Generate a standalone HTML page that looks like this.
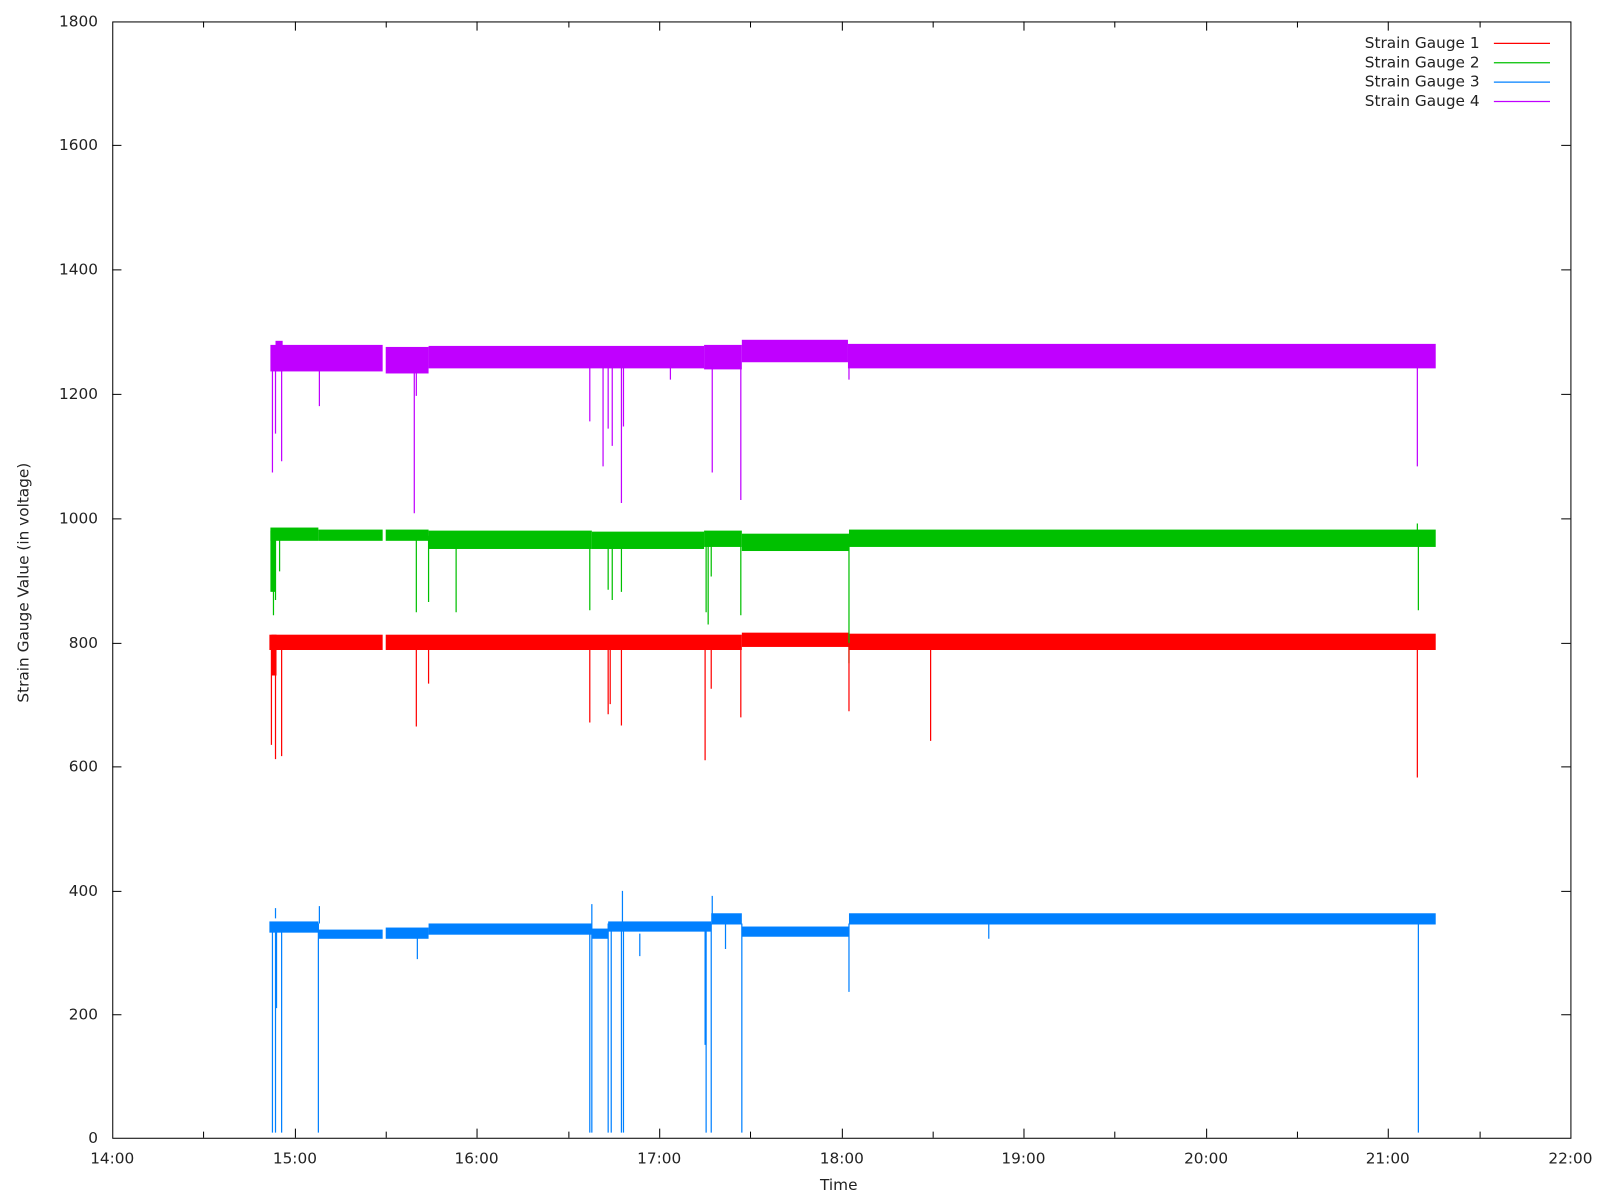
<!DOCTYPE html>
<html><head><meta charset="utf-8"><style>
html,body{margin:0;padding:0;background:#fff;width:1600px;height:1200px;overflow:hidden}
svg{display:block}
text{font-family:"DejaVu Sans","Liberation Sans",sans-serif;font-size:15px;fill:#222}
</style></head><body>
<svg width="1600" height="1200" viewBox="0 0 1568 1176" xmlns="http://www.w3.org/2000/svg">
<rect width="1568" height="1176" fill="#fff"/>
<g fill="#c000ff">
<rect x="265" y="338" width="110" height="26"/>
<rect x="378" y="340" width="42" height="26"/>
<rect x="420" y="339" width="270" height="22"/>
<rect x="690" y="338" width="37" height="24"/>
<rect x="727" y="333" width="104" height="22"/>
<rect x="831" y="337" width="576" height="24"/>
<rect x="270" y="334" width="7" height="30"/>
</g>
<g fill="#00c000">
<rect x="265" y="517" width="47" height="13"/>
<rect x="312" y="519" width="63" height="11"/>
<rect x="378" y="519" width="42" height="11"/>
<rect x="420" y="520" width="160" height="18"/>
<rect x="580" y="521" width="110" height="17"/>
<rect x="690" y="520" width="37" height="16"/>
<rect x="727" y="523" width="105" height="17"/>
<rect x="832" y="519" width="575" height="17"/>
<rect x="265" y="520" width="5" height="60"/>
</g>
<g fill="#ff0000">
<rect x="264" y="622" width="111" height="15"/>
<rect x="378" y="622" width="349" height="15"/>
<rect x="727" y="620" width="105" height="14"/>
<rect x="832" y="621" width="575" height="16"/>
<rect x="266" y="622" width="5" height="40"/>
</g>
<g fill="#0080ff">
<rect x="264" y="903" width="48" height="11"/>
<rect x="312" y="911" width="63" height="9"/>
<rect x="378" y="909" width="42" height="11"/>
<rect x="420" y="905" width="160" height="11"/>
<rect x="580" y="910" width="16" height="10"/>
<rect x="596" y="903" width="101" height="10"/>
<rect x="697" y="895" width="30" height="11"/>
<rect x="727" y="908" width="105" height="10"/>
<rect x="832" y="895" width="575" height="11"/>
</g>
<g stroke="#0080ff" stroke-width="1.2" fill="none">
<path d="M267 905V1110M270 905V1110M276 905V1110M312 905V1110M578 905V1110M580 905V1110M596 905V1110M599 905V1110M609 905V1110M611 905V1110M692 905V1110M697 905V1110M727 905V1110M1390 905V1110M271 905V988M691 905V1024M832 905V972M409 915V940M627 915V937M711 905V930M969 900V920M270 900V890M580 905V886M610 905V873M698 900V878M313 905V888"/>
</g>
<g stroke="#c000ff" stroke-width="1.2" fill="none">
<path d="M267 350V463M270 350V425M276 350V452M313 350V398M406 350V503M408 350V388M578 350V413M591 350V457M596 350V420M600 350V437M609 350V493M611 350V418M698 350V463M726 350V490M1389 350V457M832 350V372M657 350V372"/>
</g>
<g stroke="#00c000" stroke-width="1.2" fill="none">
<path d="M268 525V603M270 525V588M408 525V600M420 525V590M447 525V600M578 525V598M596 525V578M600 525V588M609 525V580M692 525V600M694 525V612M697 525V565M726 525V603M832 525V650M1390 525V598M1389 525V513M274 525V560"/>
</g>
<g stroke="#ff0000" stroke-width="1.2" fill="none">
<path d="M266 630V730M270 630V744M276 630V741M408 630V712M420 630V670M578 630V708M596 630V700M598 630V690M609 630V711M691 630V745M697 630V675M726 630V703M832 630V697M912 630V726M1389 630V762"/>
</g>
<rect x="110.5" y="21.5" width="1429" height="1094" fill="none" stroke="#000" stroke-width="1"/>
<g stroke="#000" stroke-width="1">
<path d="M110 994.5h9M1539 994.5h-9M110 873.5h9M1539 873.5h-9M110 751.5h9M1539 751.5h-9M110 630.5h9M1539 630.5h-9M110 508.5h9M1539 508.5h-9M110 386.5h9M1539 386.5h-9M110 264.5h9M1539 264.5h-9M110 142.5h9M1539 142.5h-9"/>
<path d="M289.5 1115v-9M289.5 21v9M467.5 1115v-9M467.5 21v9M646.5 1115v-9M646.5 21v9M825.5 1115v-9M825.5 21v9M1003.5 1115v-9M1003.5 21v9M1182.5 1115v-9M1182.5 21v9M1360.5 1115v-9M1360.5 21v9"/>
<path d="M199.5 1115v-6M199.5 21v6M378.5 1115v-6M378.5 21v6M557.5 1115v-6M557.5 21v6M735.5 1115v-6M735.5 21v6M914.5 1115v-6M914.5 21v6M1092.5 1115v-6M1092.5 21v6M1271.5 1115v-6M1271.5 21v6M1450.5 1115v-6M1450.5 21v6"/>
</g>
<g text-anchor="end">
<text x="96" y="1120">0</text><text x="96" y="999">200</text><text x="96" y="878">400</text><text x="96" y="756">600</text><text x="96" y="635">800</text><text x="96" y="513">1000</text><text x="96" y="391">1200</text><text x="96" y="269">1400</text><text x="96" y="147">1600</text><text x="96" y="26">1800</text>
</g>
<g text-anchor="middle">
<text x="110" y="1140">14:00</text><text x="289" y="1140">15:00</text><text x="467" y="1140">16:00</text><text x="646" y="1140">17:00</text><text x="825" y="1140">18:00</text><text x="1003" y="1140">19:00</text><text x="1182" y="1140">20:00</text><text x="1360" y="1140">21:00</text><text x="1539" y="1140">22:00</text>
<text x="822" y="1166">Time</text>
<text transform="translate(28,571) rotate(-90)">Strain Gauge Value (in voltage)</text>
</g>
<g text-anchor="end">
<text x="1450" y="47">Strain Gauge 1</text><text x="1450" y="66">Strain Gauge 2</text><text x="1450" y="85">Strain Gauge 3</text><text x="1450" y="104">Strain Gauge 4</text>
</g>
<g stroke-width="1.2">
<path d="M1464 42.5h55" stroke="#ff0000"/><path d="M1464 61.5h55" stroke="#00c000"/><path d="M1464 80.5h55" stroke="#0080ff"/><path d="M1464 99.5h55" stroke="#c000ff"/>
</g>
</svg>
</body></html>
